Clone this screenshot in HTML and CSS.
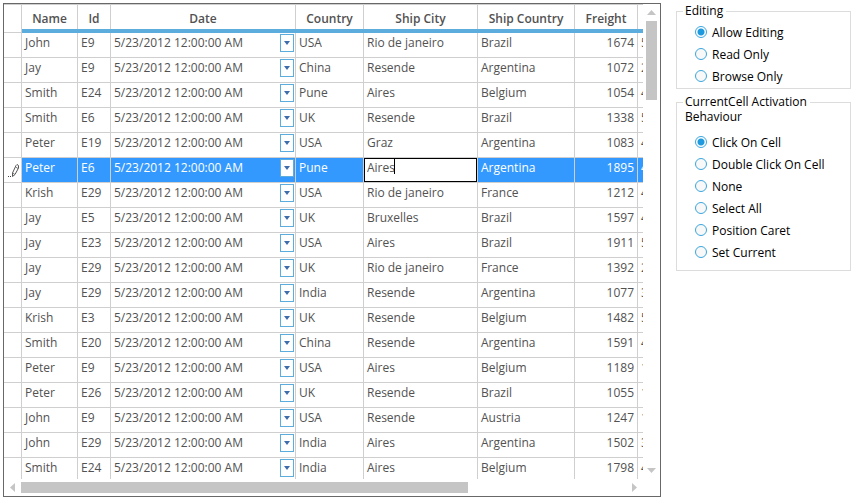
FILE: index.html
```html
<!DOCTYPE html>
<html lang="en">
<head>
<meta charset="utf-8">
<title>Grid Editing</title>
<link rel="stylesheet" href="styles.css">
</head>
<body>
<div class="app">
  <main class="grid">
    <div class="viewport">
      <table class="data">
        <colgroup><col class="c-head"><col class="c-name"><col class="c-id"><col class="c-date"><col class="c-country"><col class="c-city"><col class="c-ship"><col class="c-freight"><col class="c-next"></colgroup>
        <thead>
          <tr><td class="corner"></td><th><span>Name</span></th><th><span>Id</span></th><th><span>Date</span></th><th><span>Country</span></th><th><span>Ship City</span></th><th><span>Ship Country</span></th><th><span>Freight</span></th><th><span></span></th></tr>
        </thead>
        <tbody>
          <tr><td></td><td>John</td><td>E9</td><td><div class="date">5/23/2012 12:00:00 AM<button class="drop" aria-label="Pick date"></button></div></td><td>USA</td><td>Rio de janeiro</td><td>Brazil</td><td class="num">1674</td><td>5</td></tr>
          <tr><td></td><td>Jay</td><td>E9</td><td><div class="date">5/23/2012 12:00:00 AM<button class="drop" aria-label="Pick date"></button></div></td><td>China</td><td>Resende</td><td>Argentina</td><td class="num">1072</td><td>2</td></tr>
          <tr><td></td><td>Smith</td><td>E24</td><td><div class="date">5/23/2012 12:00:00 AM<button class="drop" aria-label="Pick date"></button></div></td><td>Pune</td><td>Aires</td><td>Belgium</td><td class="num">1054</td><td>4</td></tr>
          <tr><td></td><td>Smith</td><td>E6</td><td><div class="date">5/23/2012 12:00:00 AM<button class="drop" aria-label="Pick date"></button></div></td><td>UK</td><td>Resende</td><td>Brazil</td><td class="num">1338</td><td>5</td></tr>
          <tr><td></td><td>Peter</td><td>E19</td><td><div class="date">5/23/2012 12:00:00 AM<button class="drop" aria-label="Pick date"></button></div></td><td>USA</td><td>Graz</td><td>Argentina</td><td class="num">1083</td><td>4</td></tr>
          <tr class="selected"><td class="marker"><svg class="pencil" width="12" height="16" viewBox="0 0 12 16" aria-hidden="true"><path d="M0 13h1v1H0zM2 13h1v1H2z" fill="#444"/><path d="M4.500 13.500V10L8 2.500 9 1.500 10.500 2.500V5L7 11.500z" fill="#fff" stroke="#555"/><path d="M7.500 4l2.500 1.500M4.500 10L7 11.500" fill="none" stroke="#777"/></svg></td><td>Peter</td><td>E6</td><td><div class="date">5/23/2012 12:00:00 AM<button class="drop" aria-label="Pick date"></button></div></td><td>Pune</td><td class="editing"><div class="editor"><input type="text" value="Aires" aria-label="Ship City"><i class="caret"></i></div></td><td>Argentina</td><td class="num">1895</td><td>4</td></tr>
          <tr><td></td><td>Krish</td><td>E29</td><td><div class="date">5/23/2012 12:00:00 AM<button class="drop" aria-label="Pick date"></button></div></td><td>USA</td><td>Rio de janeiro</td><td>France</td><td class="num">1212</td><td>4</td></tr>
          <tr><td></td><td>Jay</td><td>E5</td><td><div class="date">5/23/2012 12:00:00 AM<button class="drop" aria-label="Pick date"></button></div></td><td>UK</td><td>Bruxelles</td><td>Brazil</td><td class="num">1597</td><td>4</td></tr>
          <tr><td></td><td>Jay</td><td>E23</td><td><div class="date">5/23/2012 12:00:00 AM<button class="drop" aria-label="Pick date"></button></div></td><td>USA</td><td>Aires</td><td>Brazil</td><td class="num">1911</td><td>5</td></tr>
          <tr><td></td><td>Jay</td><td>E29</td><td><div class="date">5/23/2012 12:00:00 AM<button class="drop" aria-label="Pick date"></button></div></td><td>UK</td><td>Rio de janeiro</td><td>France</td><td class="num">1392</td><td>2</td></tr>
          <tr><td></td><td>Jay</td><td>E29</td><td><div class="date">5/23/2012 12:00:00 AM<button class="drop" aria-label="Pick date"></button></div></td><td>India</td><td>Resende</td><td>Argentina</td><td class="num">1077</td><td>3</td></tr>
          <tr><td></td><td>Krish</td><td>E3</td><td><div class="date">5/23/2012 12:00:00 AM<button class="drop" aria-label="Pick date"></button></div></td><td>UK</td><td>Resende</td><td>Belgium</td><td class="num">1482</td><td>5</td></tr>
          <tr><td></td><td>Smith</td><td>E20</td><td><div class="date">5/23/2012 12:00:00 AM<button class="drop" aria-label="Pick date"></button></div></td><td>China</td><td>Resende</td><td>Argentina</td><td class="num">1591</td><td>4</td></tr>
          <tr><td></td><td>Peter</td><td>E9</td><td><div class="date">5/23/2012 12:00:00 AM<button class="drop" aria-label="Pick date"></button></div></td><td>USA</td><td>Aires</td><td>Belgium</td><td class="num">1189</td><td>1</td></tr>
          <tr><td></td><td>Peter</td><td>E26</td><td><div class="date">5/23/2012 12:00:00 AM<button class="drop" aria-label="Pick date"></button></div></td><td>UK</td><td>Resende</td><td>Brazil</td><td class="num">1055</td><td>1</td></tr>
          <tr><td></td><td>John</td><td>E9</td><td><div class="date">5/23/2012 12:00:00 AM<button class="drop" aria-label="Pick date"></button></div></td><td>USA</td><td>Resende</td><td>Austria</td><td class="num">1247</td><td>1</td></tr>
          <tr><td></td><td>John</td><td>E29</td><td><div class="date">5/23/2012 12:00:00 AM<button class="drop" aria-label="Pick date"></button></div></td><td>India</td><td>Aires</td><td>Argentina</td><td class="num">1502</td><td>3</td></tr>
          <tr><td></td><td>Smith</td><td>E24</td><td><div class="date">5/23/2012 12:00:00 AM<button class="drop" aria-label="Pick date"></button></div></td><td>India</td><td>Aires</td><td>Belgium</td><td class="num">1798</td><td>4</td></tr>
        </tbody>
      </table>
    </div>
    <div class="bar vertical">
      <button class="arrow" aria-label="Scroll up"><svg width="9" height="5" viewBox="0 0 9 5"><path d="M0 5L4.500 0 9 5z"/></svg></button>
      <div class="thumb"></div><div class="rest"></div>
      <button class="arrow" aria-label="Scroll down"><svg width="9" height="5" viewBox="0 0 9 5"><path d="M0 0h9L4.500 5z"/></svg></button>
    </div>
    <div class="bar horizontal">
      <button class="arrow" aria-label="Scroll left"><svg width="5" height="9" viewBox="0 0 5 9"><path d="M5 0v9L0 4.500z"/></svg></button>
      <div class="thumb"></div><div class="rest"></div>
      <button class="arrow" aria-label="Scroll right"><svg width="5" height="9" viewBox="0 0 5 9"><path d="M0 0l5 4.500L0 9z"/></svg></button>
    </div>
  </main>
  <aside class="side">
    <fieldset>
      <legend>Editing</legend>
      <div class="options">
        <label><input type="radio" name="edit" checked>Allow Editing</label>
        <label><input type="radio" name="edit">Read Only</label>
        <label><input type="radio" name="edit">Browse Only</label>
      </div>
    </fieldset>
    <fieldset class="tall">
      <legend>CurrentCell Activation<br>Behaviour</legend>
      <div class="options">
        <label><input type="radio" name="activate" checked>Click On Cell</label>
        <label><input type="radio" name="activate">Double Click On Cell</label>
        <label><input type="radio" name="activate">None</label>
        <label><input type="radio" name="activate">Select All</label>
        <label><input type="radio" name="activate">Position Caret</label>
        <label><input type="radio" name="activate">Set Current</label>
      </div>
    </fieldset>
  </aside>
</div>
</body>
</html>
```
FILE: styles.css
```css
* { box-sizing: border-box; }
body {
  margin: 0;
  background: #fff;
  color: #000;
  font: 12px/15px "Open Sans", "Noto Sans", sans-serif;
}
button { margin: 0; padding: 0; border: 0; background: none; font: inherit; }

.app {
  display: flex;
  gap: 15px;
  height: 100vh;
  padding: 3px 5px 5px 3px;
}

/* Grid frame: table, two scroll bars and an empty corner */
.grid {
  flex: 1;
  min-width: 0;
  display: grid;
  grid-template: minmax(0, 1fr) 17px / minmax(0, 1fr) 17px;
  border: 1px solid #686868;
}
.viewport { overflow: hidden; color: #525252; }

.data { width: 714px; table-layout: fixed; border-collapse: separate; border-spacing: 0; }
.c-head { width: 18px; }
.c-name { width: 56px; }
.c-id { width: 33px; }
.c-date { width: 185px; }
.c-country { width: 68px; }
.c-city { width: 114px; }
.c-ship { width: 97px; }
.c-freight { width: 63px; }
.c-next { width: 80px; }

.data th {
  height: 29px;
  padding: 0;
  border-top: 1px solid #cfcfcf;
  border-bottom: 4px solid #5dacde;
  font-weight: 600;
}
.data th span {
  display: block;
  height: 24px;
  border-right: 1px solid #cfcfcf;
  line-height: 28px;
}
.data td {
  height: 25px;
  padding: 1px 3px 0;
  border-right: 1px solid #cfcfcf;
  border-bottom: 1px solid #cfcfcf;
  line-height: 18px;
  vertical-align: top;
  white-space: nowrap;
}
.data .corner { border-top: 1px solid #cfcfcf; }
.data .num { text-align: right; }

.date { display: flex; justify-content: space-between; margin-right: -2px; }
.drop {
  display: grid;
  place-items: center;
  width: 14px;
  height: 18px;
  border: 1px solid #5dacde;
  background: #fff;
}
.drop::before {
  content: "";
  width: 6px;
  height: 4px;
  background: #3d6cab;
  clip-path: polygon(0 0, 100% 0, 50% 100%);
}

.selected td { background: #3399ff; color: #fff; }
.data .marker { padding: 5px 0 0 4px; background: #fff; }
.pencil { display: block; }
.data .editing { padding: 0; }
.editor { position: relative; height: 24px; }
.editor input {
  display: block;
  width: 100%;
  height: 24px;
  padding: 0 2px 5px;
  border: 1px solid #000;
  border-radius: 0;
  outline: 0;
  background: #fff;
  color: #525252;
  font: inherit;
}
.caret { position: absolute; left: 30px; top: 1px; width: 1px; height: 15px; background: #000; }

.bar { display: flex; }
.vertical { flex-direction: column; }
.horizontal { grid-row: 2; }
.arrow { flex: none; display: grid; place-items: center; width: 17px; height: 17px; }
.arrow path { fill: #c5c5c5; }
.thumb { background: #c5c5c5; }
.vertical .thumb { flex: 79; margin: 0 3px; }
.vertical .rest { flex: 362; }
.horizontal .thumb { flex: 447; margin: 3px 0; }
.horizontal .rest { flex: 158; }

/* Option groups */
.side { width: 175px; padding-top: 8px; }
fieldset {
  display: flow-root;
  min-width: 0;
  margin: 0 0 13px;
  padding: 0 0 1px;
  border: 1px solid #dcdcdc;
}
legend {
  float: left;
  margin: -9px 0 0 6px;
  padding: 0 3px 0 2px;
  background: #fff;
}
.options { clear: both; padding: 3px 0 0 18px; }
.tall { padding-bottom: 7px; }
.tall .options { padding-top: 7px; }
label { display: flex; align-items: center; gap: 5px; height: 22px; }
input[type="radio"] {
  appearance: none;
  width: 12px;
  height: 12px;
  margin: 0;
  border: 1px solid #3aa6de;
  border-radius: 50%;
  background: #f8f8f8;
}
input[type="radio"]:checked { background: radial-gradient(circle, #1f9ade 3px, #fff 4px); }
```
